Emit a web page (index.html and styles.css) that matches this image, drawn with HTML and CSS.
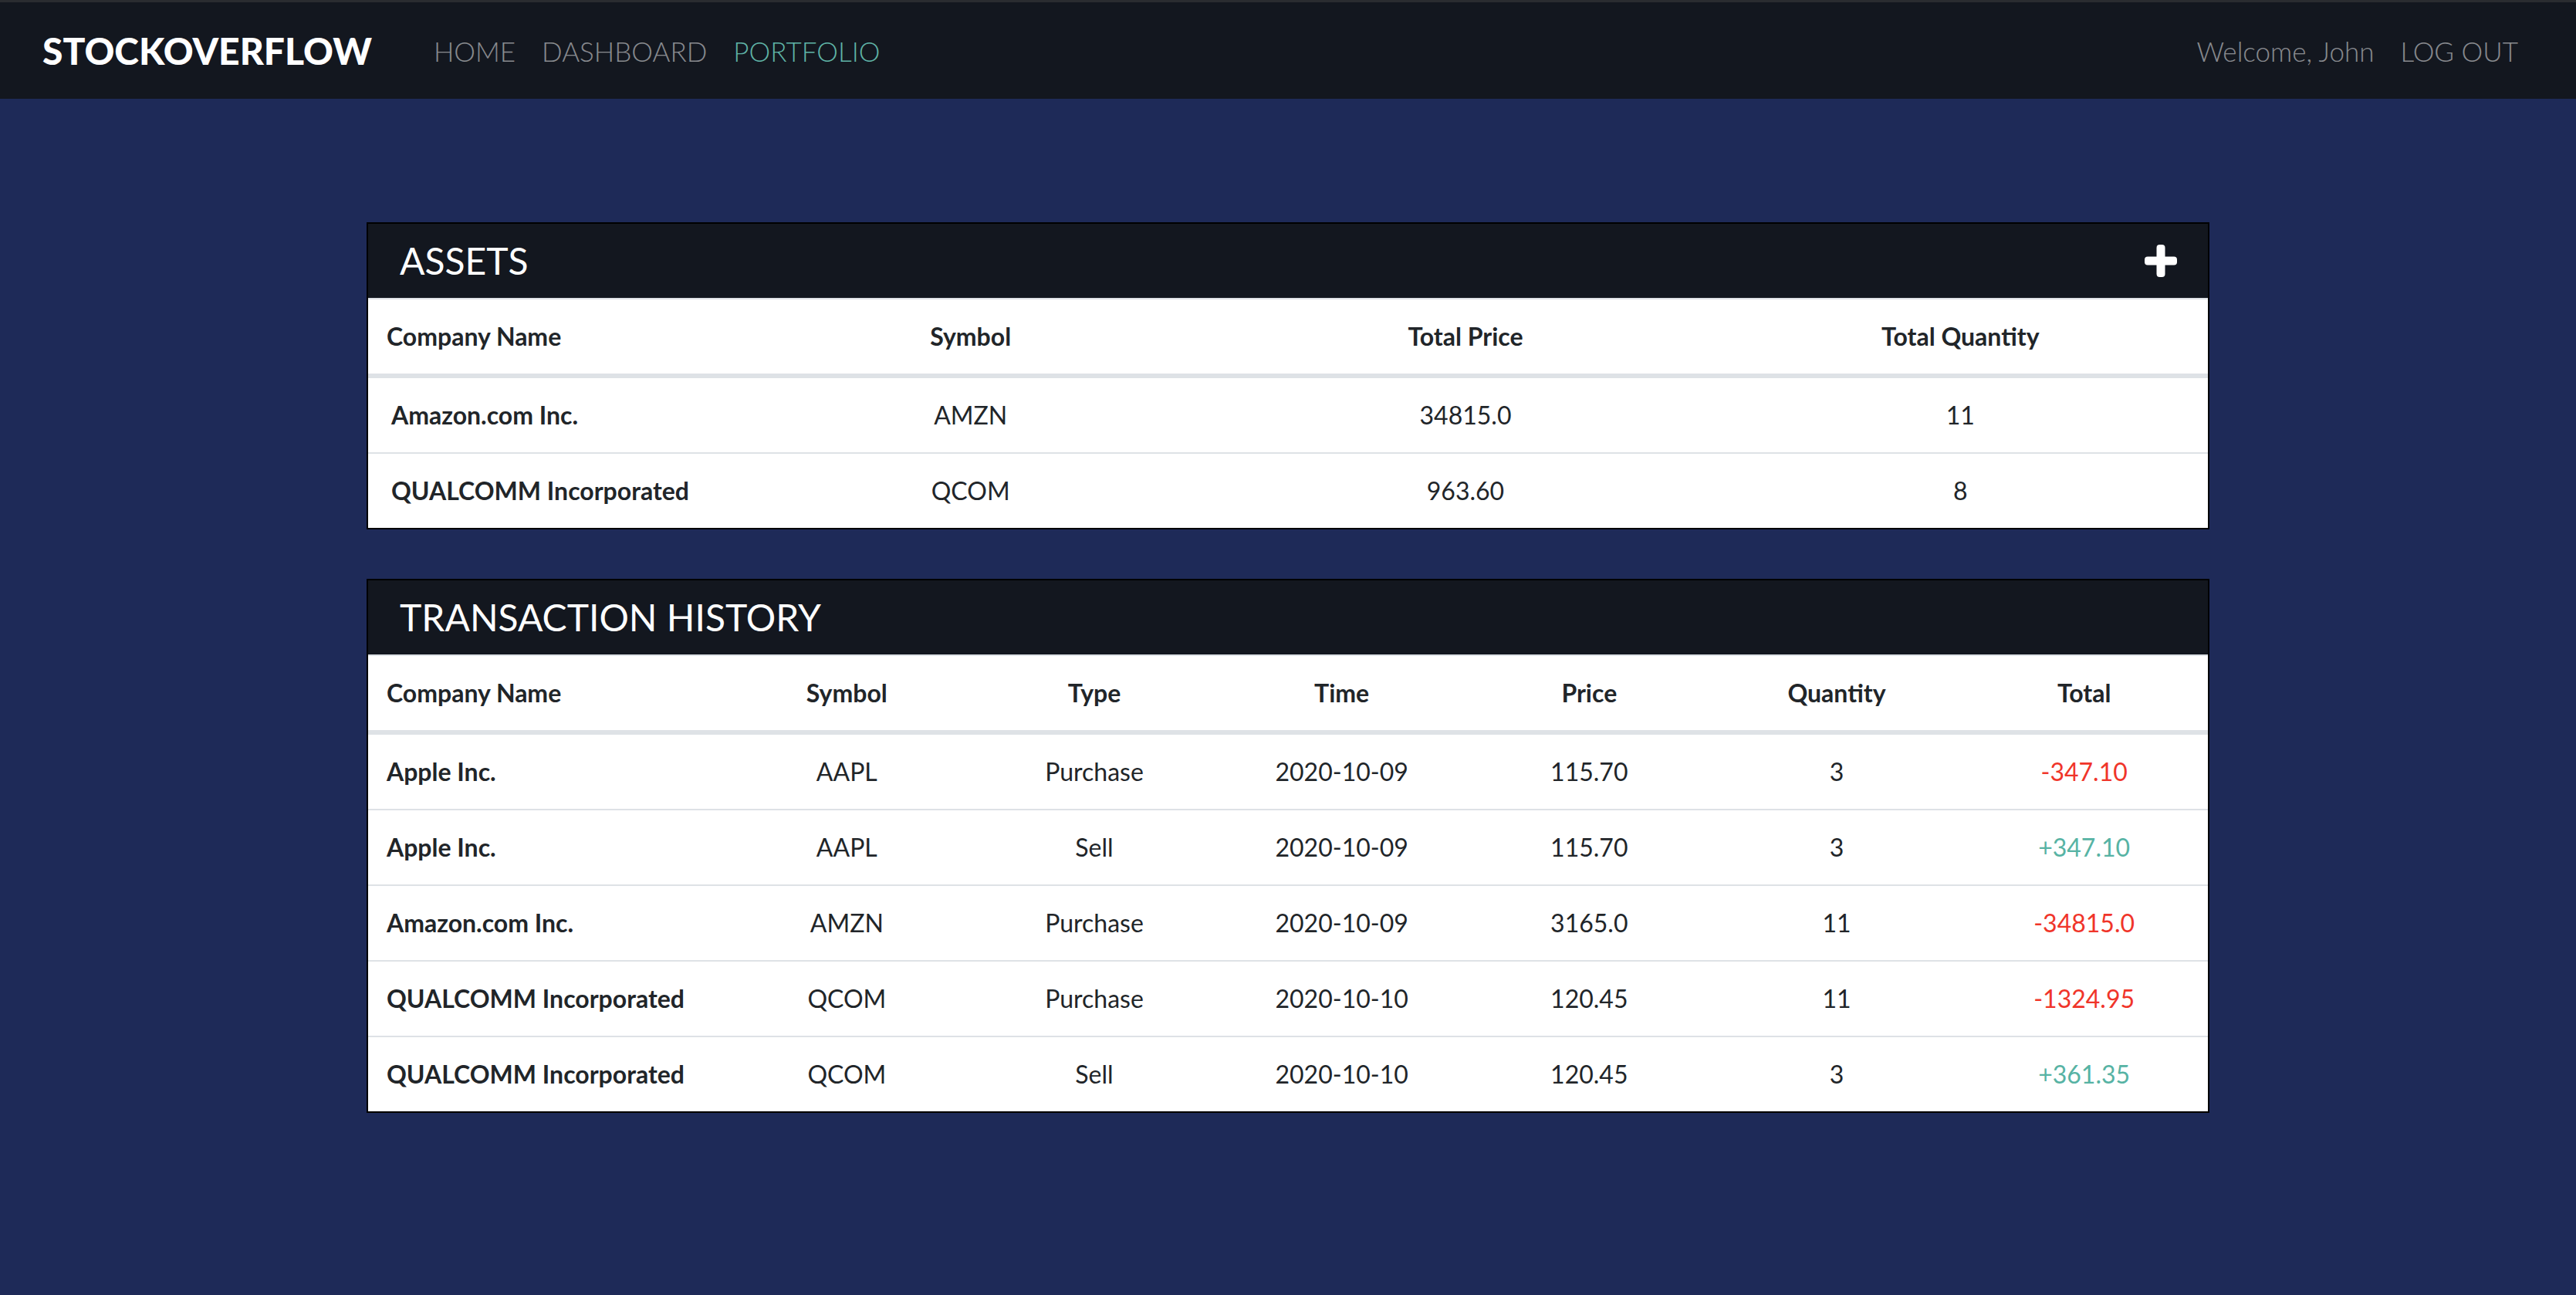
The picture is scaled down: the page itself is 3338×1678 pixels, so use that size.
FILE: index.html
```html
<!DOCTYPE html>
<html lang="en">
<head>
<meta charset="utf-8">
<title>StockOverflow - Portfolio</title>
<link rel="stylesheet" href="styles.css">
</head>
<body>
<nav class="navbar">
  <div class="nav-left">
    <a class="brand" href="#">STOCKOVERFLOW</a>
    <ul class="nav-links">
      <li><a class="nav-link" href="#">HOME</a></li>
      <li><a class="nav-link" href="#">DASHBOARD</a></li>
      <li><a class="nav-link active" href="#">PORTFOLIO</a></li>
    </ul>
  </div>
  <ul class="nav-links nav-right">
    <li><span class="nav-link">Welcome, John</span></li>
    <li><a class="nav-link" href="#">LOG OUT</a></li>
  </ul>
</nav>

<main class="content">
  <section class="card">
    <header class="card-header">
      <h2 class="card-title">ASSETS</h2>
      <button class="add-btn" aria-label="Add asset">
        <svg width="42" height="42" viewBox="0 0 42 42">
          <rect x="15.5" y="0" width="11" height="42" rx="4" fill="#fff"/>
          <rect x="0" y="15.5" width="42" height="11" rx="4" fill="#fff"/>
        </svg>
      </button>
    </header>
    <table class="data-table assets">
      <colgroup><col class="col-first"><col><col><col></colgroup>
      <thead>
        <tr><th class="left">Company Name</th><th>Symbol</th><th>Total Price</th><th>Total Quantity</th></tr>
      </thead>
      <tbody>
        <tr><th class="left row-name">Amazon.com Inc.</th><td>AMZN</td><td>34815.0</td><td>11</td></tr>
        <tr><th class="left row-name">QUALCOMM Incorporated</th><td>QCOM</td><td>963.60</td><td>8</td></tr>
      </tbody>
    </table>
  </section>

  <section class="card">
    <header class="card-header">
      <h2 class="card-title">TRANSACTION HISTORY</h2>
    </header>
    <table class="data-table">
      <colgroup><col class="col-first"><col><col><col><col><col><col></colgroup>
      <thead>
        <tr><th class="left">Company Name</th><th>Symbol</th><th>Type</th><th>Time</th><th>Price</th><th>Quantity</th><th>Total</th></tr>
      </thead>
      <tbody>
        <tr><th class="left">Apple Inc.</th><td>AAPL</td><td>Purchase</td><td>2020-10-09</td><td>115.70</td><td>3</td><td class="neg">-347.10</td></tr>
        <tr><th class="left">Apple Inc.</th><td>AAPL</td><td>Sell</td><td>2020-10-09</td><td>115.70</td><td>3</td><td class="pos">+347.10</td></tr>
        <tr><th class="left">Amazon.com Inc.</th><td>AMZN</td><td>Purchase</td><td>2020-10-09</td><td>3165.0</td><td>11</td><td class="neg">-34815.0</td></tr>
        <tr><th class="left">QUALCOMM Incorporated</th><td>QCOM</td><td>Purchase</td><td>2020-10-10</td><td>120.45</td><td>11</td><td class="neg">-1324.95</td></tr>
        <tr><th class="left">QUALCOMM Incorporated</th><td>QCOM</td><td>Sell</td><td>2020-10-10</td><td>120.45</td><td>3</td><td class="pos">+361.35</td></tr>
      </tbody>
    </table>
  </section>
</main>
</body>
</html>
```
FILE: styles.css
```css
html, body {
  margin: 0;
  padding: 0;
}
body {
  background: #1e2a58;
  font-family: "Lato", "Open Sans", sans-serif;
  color: #212529;
  min-height: 100vh;
}

.navbar {
  display: flex;
  align-items: center;
  justify-content: space-between;
  height: 125px;
  border-top: 3px solid #2a2c30;
  background: #13171f;
  padding: 0 75px 0 55px;
}
.nav-left {
  display: flex;
  align-items: center;
}
.brand {
  color: #fff;
  text-decoration: none;
  font-weight: 900;
  font-size: 48px;
  margin-right: 80px;
}
.nav-links {
  list-style: none;
  display: flex;
  align-items: center;
  gap: 34px;
  margin: 0;
  padding: 0;
}
.nav-link {
  color: rgba(255, 255, 255, 0.5);
  text-decoration: none;
  font-weight: 300;
  font-size: 35px;
}
.nav-link.active {
  color: #5fb3a6;
}

.content {
  width: 2388px;
  margin: 160px auto 0;
  display: flex;
  flex-direction: column;
  gap: 64px;
}
.card {
  border: 2px solid #000;
  background: #fff;
}
.card-header {
  height: 96px;
  background: #13171f;
  display: flex;
  align-items: center;
  justify-content: space-between;
  padding: 0 40px 0 41px;
}
.card-title {
  margin: 0;
  color: #fff;
  font-weight: 400;
  font-size: 48px;
  line-height: 1;
}
.add-btn {
  background: none;
  border: 0;
  padding: 0;
  display: flex;
  cursor: pointer;
}

.data-table {
  width: 100%;
  border-collapse: separate;
  border-spacing: 0;
  table-layout: fixed;
  font-size: 32px;
}
.col-first {
  width: 460px;
}
.data-table th,
.data-table td {
  padding: 24px 24px;
  line-height: 48px;
  border-top: 2px solid #dee2e6;
  text-align: center;
  white-space: nowrap;
}
.data-table th {
  font-weight: 700;
}
.data-table td {
  font-weight: 400;
}
.data-table thead th {
  border-bottom: 4px solid #dee2e6;
}
.data-table .left {
  text-align: left;
}
.data-table .row-name {
  padding-left: 30px;
}
.neg {
  color: #f0352a;
}
.pos {
  color: #57b3a4;
}
```
